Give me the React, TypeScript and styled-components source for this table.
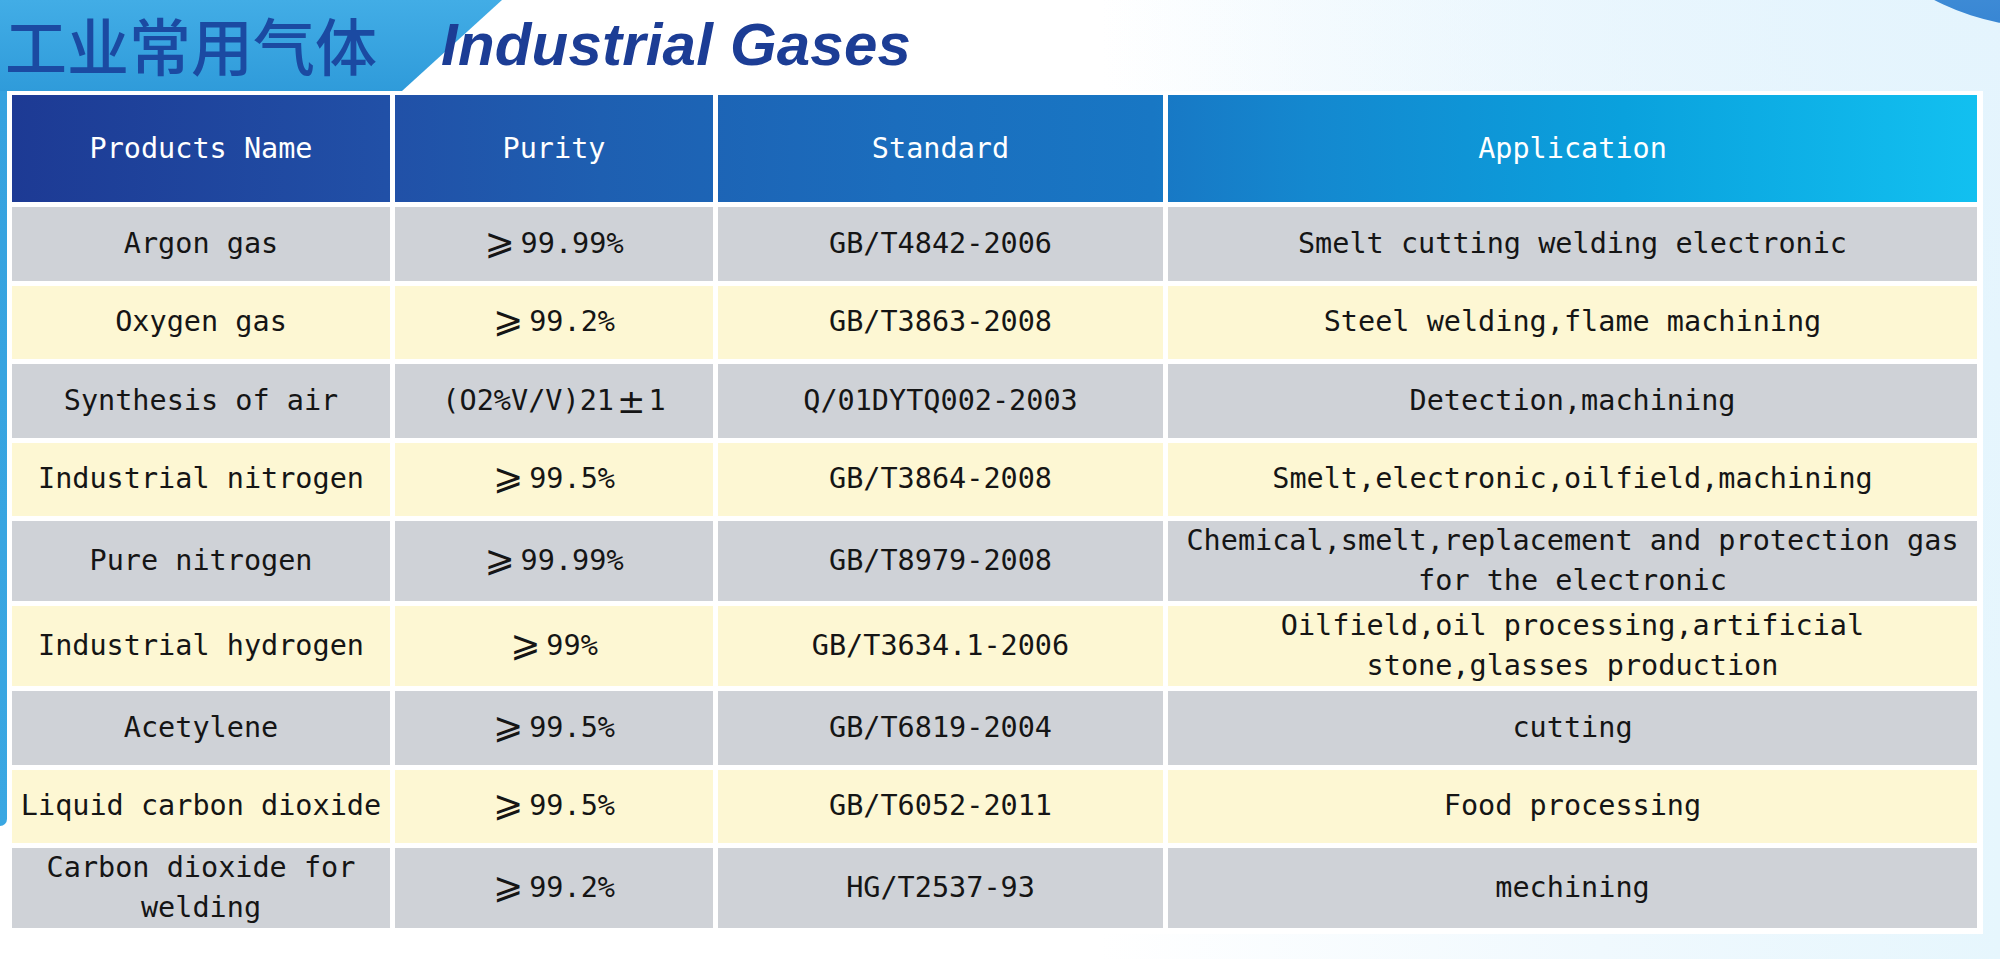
import { FC } from "react";
import styled, { createGlobalStyle } from "styled-components";

const GlobalStyle = createGlobalStyle`
  html, body {
    margin: 0;
    padding: 0;
  }
  body {
    width: 2000px;
    height: 959px;
    overflow: hidden;
    background: #ffffff;
  }
`;

type Gas = {
  name: string;
  purity: string;
  standard: string;
  application: string;
};

const gases: Gas[] = [
  { name: "Argon gas", purity: "99.99%", standard: "GB/T4842-2006", application: "Smelt cutting welding electronic" },
  { name: "Oxygen gas", purity: "99.2%", standard: "GB/T3863-2008", application: "Steel welding,flame machining" },
  { name: "Synthesis of air", purity: "", standard: "Q/01DYTQ002-2003", application: "Detection,machining" },
  { name: "Industrial nitrogen", purity: "99.5%", standard: "GB/T3864-2008", application: "Smelt,electronic,oilfield,machining" },
  { name: "Pure nitrogen", purity: "99.99%", standard: "GB/T8979-2008", application: "Chemical,smelt,replacement and protection gas\nfor the electronic" },
  { name: "Industrial hydrogen", purity: "99%", standard: "GB/T3634.1-2006", application: "Oilfield,oil processing,artificial\nstone,glasses production" },
  { name: "Acetylene", purity: "99.5%", standard: "GB/T6819-2004", application: "cutting" },
  { name: "Liquid carbon dioxide", purity: "99.5%", standard: "GB/T6052-2011", application: "Food processing" },
  { name: "Carbon dioxide for\nwelding", purity: "99.2%", standard: "HG/T2537-93", application: "mechining" },
];

const Page = styled.div`
  position: relative;
  width: 2000px;
  height: 959px;
  overflow: hidden;
  background:
    radial-gradient(ellipse 900px 700px at 100% 0%, #e4f4fd 0%, rgba(228, 244, 253, 0) 100%),
    linear-gradient(90deg, #ffffff 0%, #ffffff 55%, #f0f9fe 80%, #e6f6fd 100%);
`;

const CornerArc = styled.div`
  position: absolute;
  top: -170px;
  right: -150px;
  width: 300px;
  height: 190px;
  border-radius: 50%;
  background: linear-gradient(160deg, #6aaee6 0%, #2f7fd0 100%);
  transform: rotate(18deg);
`;

const SideStrip = styled.div`
  position: absolute;
  left: 0;
  top: 88px;
  width: 7px;
  height: 738px;
  background: linear-gradient(180deg, #35a2df 0%, #3aa7e2 100%);
  border-bottom-right-radius: 14px;
`;

const TitleBar = styled.header`
  position: relative;
  height: 91px;
  display: flex;
  align-items: center;
  padding-left: 5px;

  &::before {
    content: "";
    position: absolute;
    left: 0;
    top: 0;
    width: 502px;
    height: 91px;
    background: linear-gradient(180deg, #42ade6 0%, #2f9bda 100%);
    clip-path: polygon(0 0, 502px 0, 402px 91px, 0 91px);
  }
`;

const CnTitle = styled.h1`
  position: relative;
  margin: 0;
  font-family: "Noto Sans CJK SC", sans-serif;
  font-weight: 500;
  font-size: 62px;
  line-height: 1;
  color: #1b4aa2;
  margin-top: -4px;
`;

const EnTitle = styled.h2`
  position: relative;
  margin: -2px 0 0 64px;
  font-family: "Liberation Sans", Arial, sans-serif;
  font-weight: 700;
  font-style: italic;
  font-size: 60px;
  line-height: 1;
  color: #1c3d95;
  letter-spacing: 0.2px;
`;

const TableFrame = styled.section`
  position: relative;
  margin: 0 0 0 7px;
  width: 1976px;
  box-sizing: border-box;
  padding: 4px 6px 6px 5px;
  background: #ffffff;
`;

const columns = "378px 323px 450px 1fr";

const HeaderRow = styled.div`
  display: grid;
  grid-template-columns: ${columns};
  height: 107px;
  margin-bottom: 5px;
  background: linear-gradient(
    90deg,
    #1d3a94 0%,
    #2150a7 19%,
    #1e5fb1 30%,
    #1b6dbd 45%,
    #1877c4 58%,
    #1488cf 66%,
    #0aa1dd 82%,
    #12c0f0 100%
  );
`;

const Body = styled.div`
  display: grid;
  grid-template-rows: repeat(9, 1fr);
  row-gap: 5px;
  height: 721px;
`;

const Row = styled.div<{ $tone: "gray" | "cream" }>`
  display: grid;
  grid-template-columns: ${columns};
  background: ${({ $tone }) => ($tone === "gray" ? "#cfd2d7" : "#fdf7d3")};
`;

const Cell = styled.div<{ $head?: boolean }>`
  display: flex;
  align-items: center;
  justify-content: center;
  text-align: center;
  white-space: pre-line;
  font-family: "DejaVu Sans Mono", "Liberation Mono", monospace;
  font-size: 28.5px;
  line-height: 40px;
  color: ${({ $head }) => ($head ? "#ffffff" : "#151515")};
  & + & {
    border-left: 5px solid #ffffff;
  }
`;

const Sym = styled.span`
  position: relative;
  top: -2px;
  font-family: "DejaVu Sans", sans-serif;
  font-size: 36px;
  line-height: 0;
  margin-right: 6px;
`;

const PlusMinus = styled.span`
  font-family: "DejaVu Sans", sans-serif;
  font-size: 34px;
  line-height: 0;
  margin: 0 3px;
`;

const Purity: FC<{ value: string }> = ({ value }) => {
  if (!value) {
    return (
      <>
        (O2%V/V)21<PlusMinus>±</PlusMinus>1
      </>
    );
  }
  return (
    <>
      <Sym>⩾</Sym>
      {value}
    </>
  );
};

export default function App() {
  return (
    <>
      <GlobalStyle />
      <Page>
        <CornerArc />
        <SideStrip />
        <TitleBar>
          <CnTitle>工业常用气体</CnTitle>
          <EnTitle>Industrial Gases</EnTitle>
        </TitleBar>
        <TableFrame>
          <HeaderRow>
            <Cell $head>Products Name</Cell>
            <Cell $head>Purity</Cell>
            <Cell $head>Standard</Cell>
            <Cell $head>Application</Cell>
          </HeaderRow>
          <Body>
            {gases.map((g, i) => (
              <Row key={g.standard} $tone={i % 2 === 0 ? "gray" : "cream"}>
                <Cell>{g.name}</Cell>
                <Cell>
                  <Purity value={g.purity} />
                </Cell>
                <Cell>{g.standard}</Cell>
                <Cell>{g.application}</Cell>
              </Row>
            ))}
          </Body>
        </TableFrame>
      </Page>
    </>
  );
}
